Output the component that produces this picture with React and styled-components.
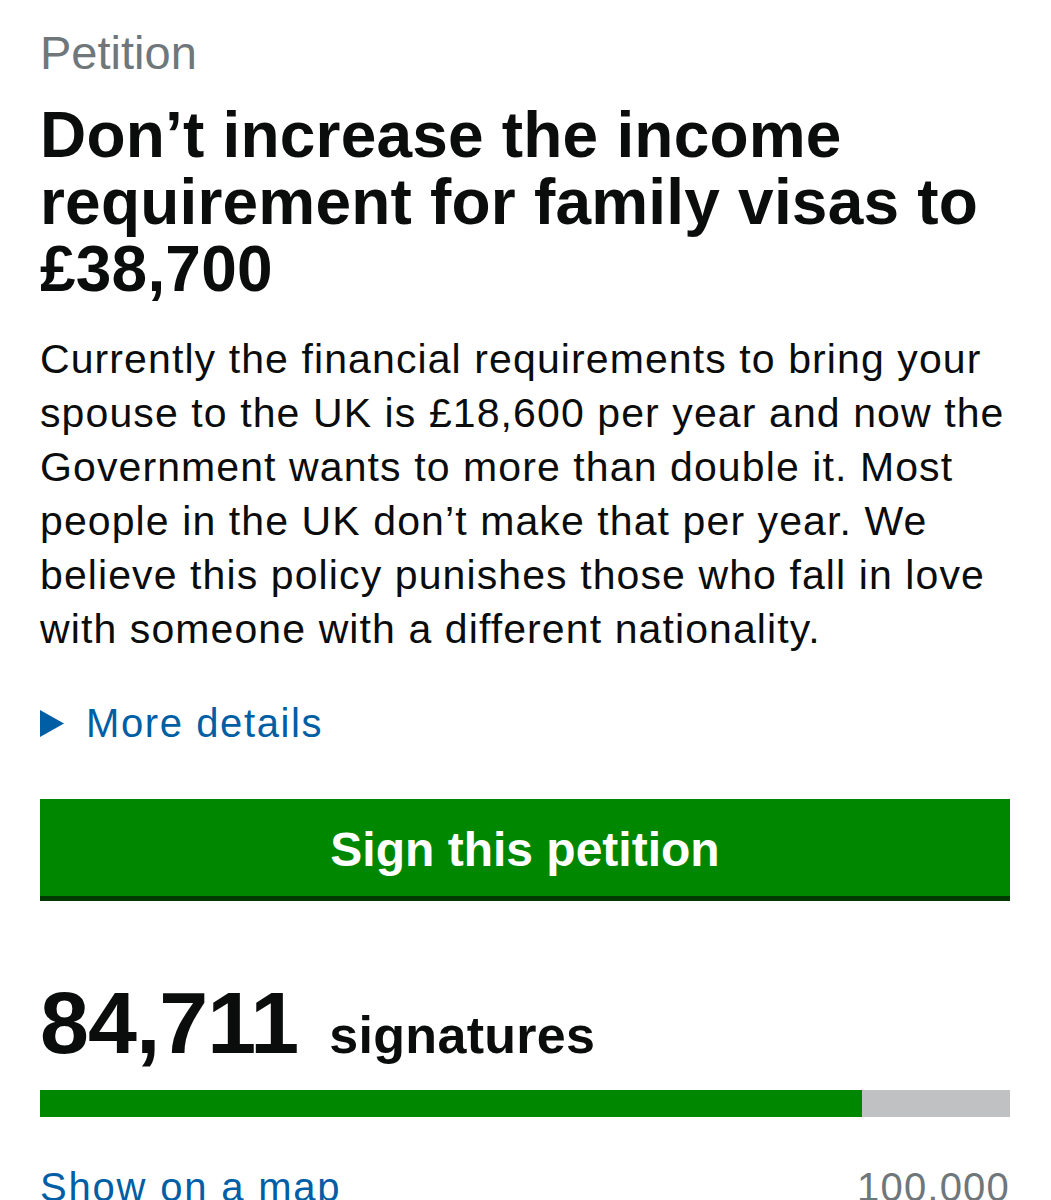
import styled, { createGlobalStyle } from "styled-components";

const GlobalStyle = createGlobalStyle`
  body {
    margin: 0;
    background: #ffffff;
    font-family: "Liberation Sans", Arial, Helvetica, sans-serif;
    color: #0b0c0c;
  }
`;

const summary = [
  "Currently the financial requirements to bring your",
  "spouse to the UK is £18,600 per year and now the",
  "Government wants to more than double it. Most",
  "people in the UK don’t make that per year. We",
  "believe this policy punishes those who fall in love",
  "with someone with a different nationality.",
];

const signatures = 84711;
const target = 100000;

export default function App() {
  const progress = Math.min(100, (signatures / target) * 100);

  return (
    <Page>
      <GlobalStyle />
      <Caption>Petition</Caption>
      <Title>
        Don’t increase the income
        <br />
        requirement for family visas to
        <br />
        £38,700
      </Title>
      <Summary>
        {summary.map((line) => (
          <Line key={line}>{line}</Line>
        ))}
      </Summary>
      <Details>
        <Arrow viewBox="0 0 24 27" aria-hidden="true">
          <path d="M0 0 L24 13.5 L0 27 Z" fill="#005ea5" />
        </Arrow>
        More details
      </Details>
      <SignButton>Sign this petition</SignButton>
      <Count>
        <CountNumber>{signatures.toLocaleString("en-GB")}</CountNumber>
        <CountLabel>signatures</CountLabel>
      </Count>
      <Bar>
        <BarFill style={{ width: `${progress}%` }} />
      </Bar>
      <Footer>
        <MapLink>Show on a map</MapLink>
        <Target>{target.toLocaleString("en-GB")}</Target>
      </Footer>
    </Page>
  );
}

const Page = styled.div`
  padding: 26px 41px 0 40px;
  height: 1200px;
  box-sizing: border-box;
  overflow: hidden;
`;

const Caption = styled.div`
  font-size: 47px;
  line-height: 54px;
  color: #6f777b;
`;

const Title = styled.h1`
  margin: 22px 0 0;
  font-size: 64px;
  line-height: 67px;
  font-weight: 700;
  letter-spacing: 0.2px;
  white-space: nowrap;
`;

const Summary = styled.div`
  margin-top: 29px;
  font-size: 41px;
  line-height: 54px;
  letter-spacing: 1.1px;
`;

const Line = styled.div`
  white-space: nowrap;
`;

const Details = styled.div`
  margin-top: 40px;
  display: flex;
  align-items: center;
  gap: 22px;
  font-size: 40px;
  line-height: 54px;
  color: #005ea5;
  letter-spacing: 1.6px;
`;

const Arrow = styled.svg`
  width: 24px;
  height: 27px;
  flex: none;
`;

const SignButton = styled.div`
  margin-top: 49px;
  height: 93px;
  padding-top: 4px;
  border-bottom: 5px solid #003a00;
  background: #008700;
  color: #ffffff;
  font-size: 48px;
  line-height: 93px;
  font-weight: 700;
  text-align: center;
`;

const Count = styled.div`
  margin-top: 77px;
  display: flex;
  align-items: baseline;
  gap: 31px;
`;

const CountNumber = styled.span`
  font-size: 88px;
  line-height: 90px;
  font-weight: 700;
  letter-spacing: -1px;
`;

const CountLabel = styled.span`
  font-size: 52px;
  font-weight: 700;
  letter-spacing: 0.3px;
`;

const Bar = styled.div`
  margin-top: 22px;
  height: 27px;
  background: #bfc1c3;
`;

const BarFill = styled.div`
  height: 100%;
  background: #008700;
`;

const Footer = styled.div`
  margin-top: 43px;
  display: flex;
  justify-content: space-between;
  font-size: 40px;
  line-height: 54px;
`;

const MapLink = styled.span`
  color: #005ea5;
  letter-spacing: 1.8px;
`;

const Target = styled.span`
  color: #6f777b;
  letter-spacing: 1.2px;
`;
